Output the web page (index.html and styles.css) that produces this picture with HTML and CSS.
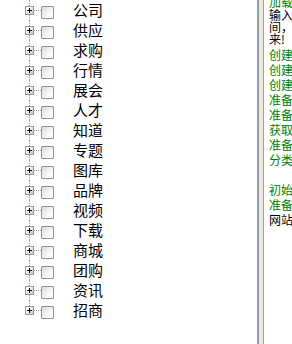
FILE: index.html
```html
<!DOCTYPE html>
<html lang="zh-CN">
<head>
    <meta charset="UTF-8">
    <title>分类采集</title>
    <link rel="stylesheet" href="styles.css">
</head>
<body>
    <div class="frame">
        <div class="tree-pane">
            <ul class="tree">
                <li class="node"><span class="joint"><span class="expander"></span></span><span class="check"></span><span class="label">公司</span></li>
                <li class="node"><span class="joint"><span class="expander"></span></span><span class="check"></span><span class="label">供应</span></li>
                <li class="node"><span class="joint"><span class="expander"></span></span><span class="check"></span><span class="label">求购</span></li>
                <li class="node"><span class="joint"><span class="expander"></span></span><span class="check"></span><span class="label">行情</span></li>
                <li class="node"><span class="joint"><span class="expander"></span></span><span class="check"></span><span class="label">展会</span></li>
                <li class="node"><span class="joint"><span class="expander"></span></span><span class="check"></span><span class="label">人才</span></li>
                <li class="node"><span class="joint"><span class="expander"></span></span><span class="check"></span><span class="label">知道</span></li>
                <li class="node"><span class="joint"><span class="expander"></span></span><span class="check"></span><span class="label">专题</span></li>
                <li class="node"><span class="joint"><span class="expander"></span></span><span class="check"></span><span class="label">图库</span></li>
                <li class="node"><span class="joint"><span class="expander"></span></span><span class="check"></span><span class="label">品牌</span></li>
                <li class="node"><span class="joint"><span class="expander"></span></span><span class="check"></span><span class="label">视频</span></li>
                <li class="node"><span class="joint"><span class="expander"></span></span><span class="check"></span><span class="label">下载</span></li>
                <li class="node"><span class="joint"><span class="expander"></span></span><span class="check"></span><span class="label">商城</span></li>
                <li class="node"><span class="joint"><span class="expander"></span></span><span class="check"></span><span class="label">团购</span></li>
                <li class="node"><span class="joint"><span class="expander"></span></span><span class="check"></span><span class="label">资讯</span></li>
                <li class="node last"><span class="joint"><span class="expander"></span></span><span class="check"></span><span class="label">招商</span></li>
            </ul>
        </div>

        <div class="splitter"></div>

        <div class="log-pane">
            <div class="log ok first">加载分类列表完成</div>
            <div class="log note">输入采集的起止时</div>
            <div class="log note">间，然后点击开始</div>
            <div class="log note">来!</div>
            <div class="log ok">创建公司数据表</div>
            <div class="log ok">创建供应数据表</div>
            <div class="log ok">创建求购数据表</div>
            <div class="log ok">准备读取分类</div>
            <div class="log ok">准备写入缓存</div>
            <div class="log ok">获取远程数据</div>
            <div class="log ok">准备更新分类</div>
            <div class="log ok">分类更新完成</div>
            <div class="log ok blank">&nbsp;</div>
            <div class="log ok">初始化采集任务</div>
            <div class="log ok">准备开始采集</div>
            <div class="log">网站连接正常</div>
        </div>
    </div>
</body>
</html>
```

FILE: styles.css
```css
body {
    margin: 0;
    background: #ffffff;
    font-family: "Noto Sans CJK SC", "Liberation Sans", sans-serif;
    color: #000000;
}

.frame {
    display: flex;
    height: 344px;
    overflow: hidden;
}

/* arbre des catégories */
.tree-pane {
    width: 257px;
    flex: none;
}

.tree {
    list-style: none;
    margin: 0;
    padding: 0 0 0 21px;
}

.node {
    display: flex;
    height: 20px;
}

.joint {
    position: relative;
    width: 20px;
    height: 20px;
    flex: none;
}

.joint::before {
    content: "";
    position: absolute;
    left: 8px;
    top: 0;
    bottom: 0;
    border-left: 1px dotted #a0a0a0;
}

.last .joint::before {
    bottom: 10px;
}

.joint::after {
    content: "";
    position: absolute;
    left: 13px;
    top: 10px;
    width: 7px;
    border-top: 1px dotted #a0a0a0;
}

.expander {
    position: absolute;
    left: 4px;
    top: 6px;
    width: 7px;
    height: 7px;
    border: 1px solid #7b9ebd;
    background: linear-gradient(135deg, #ffffff 30%, #c6c3b5);
    z-index: 1;
}

.expander::before,
.expander::after {
    content: "";
    position: absolute;
    background: #000000;
}

.expander::before {
    left: 1px;
    top: 3px;
    width: 5px;
    height: 1px;
}

.expander::after {
    left: 3px;
    top: 1px;
    width: 1px;
    height: 5px;
}

.check {
    width: 11px;
    height: 11px;
    margin-top: 6px;
    border: 1px solid #8e8f9f;
    border-radius: 1px;
    background: linear-gradient(135deg, #dcdcd7, #ffffff 80%);
    flex: none;
}

.label {
    margin-left: 19px;
    font-size: 15px;
    line-height: 20px;
    white-space: nowrap;
}

/* séparateur */
.splitter {
    width: 4px;
    flex: none;
    background: #ece9d8;
    border-left: 2px solid #8d9db9;
    border-right: 1px solid #a5a396;
}

/* journal */
.log-pane {
    flex: 1;
    padding-left: 5px;
    overflow: hidden;
    font-size: 12px;
}

.log {
    white-space: nowrap;
    line-height: 15px;
}

.log.first {
    margin-top: -6px;
}

.note {
    line-height: 12px;
}

.note + .ok {
    margin-top: 2px;
}

.ok {
    color: #008000;
}
```
